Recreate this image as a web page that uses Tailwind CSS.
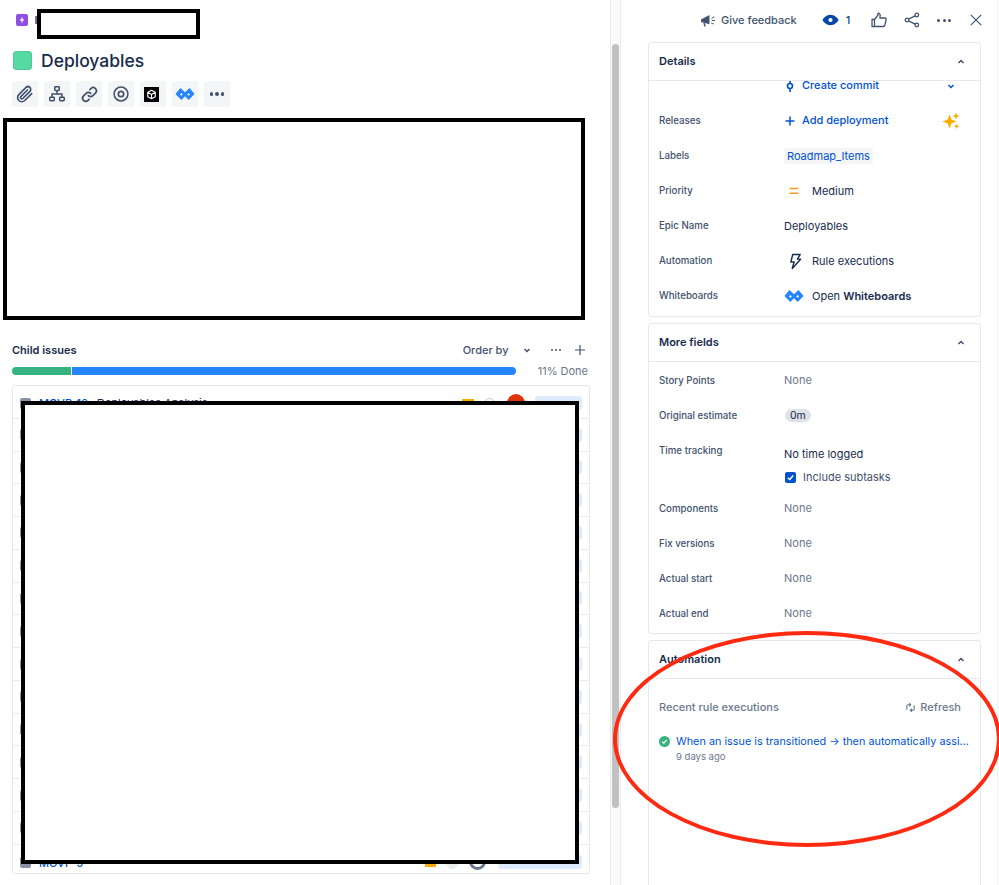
<!DOCTYPE html>
<html lang="en">
<head>
<meta charset="utf-8">
<script src="https://cdn.jsdelivr.net/npm/@tailwindcss/browser@4"></script>
<title>Deployables</title>
</head>
<body class="bg-white">
<div class="relative w-[999px] h-[885px] overflow-hidden bg-white text-[#172b4d] font-['Inter','Liberation_Sans',sans-serif]">
  <div class="flex h-full">
    <!-- Left column -->
    <div class="w-[610px] shrink-0 flex flex-col pl-3">
      <div class="h-[40px] flex items-center pl-1 shrink-0 gap-[7px]">
        <div class="w-3 h-3 mt-[-1px] rounded-[2px] bg-[#904ee2] flex items-center justify-center">
          <svg viewBox="0 0 12 12" class="w-3 h-3"><path d="M6.600 2.500 3.800 6.600h1.900l-.4 2.900 2.900-4.200H6.300z" fill="#fff"/></svg>
        </div>
        <div class="w-[2px] h-2 bg-[#6b778c]"></div>
      </div>
      <div class="flex items-center gap-[9px] h-[41px] shrink-0 pl-px">
        <div class="w-[19px] h-[19px] rounded-[3px] bg-[#57d9a3] border border-[#4fc796]"></div>
        <h1 class="text-[17.500px] leading-6 font-medium">Deployables</h1>
      </div>
      <div class="flex gap-[6px] shrink-0">
        <div class="w-[26px] h-[26px] rounded-[3px] bg-[#f4f5f7] flex items-center justify-center">
          <svg viewBox="0 0 24 24" class="w-[20px] h-[20px]" fill="none" stroke="#42526e" stroke-width="2" stroke-linecap="round"><path d="M20 11.500l-8.300 8.300a5 5 0 0 1-7.100-7.100l8.600-8.600a3.300 3.300 0 0 1 4.700 4.700l-8.600 8.600a1.600 1.600 0 0 1-2.300-2.300l7.900-7.900"/></svg>
        </div>
        <div class="w-[26px] h-[26px] rounded-[3px] bg-[#f4f5f7] flex items-center justify-center">
          <svg viewBox="0 0 20 20" class="w-[18px] h-[18px]" fill="none" stroke="#42526e" stroke-width="1.700"><rect x="7.500" y="2" width="5" height="4" rx=".8"/><rect x="2" y="13.500" width="5" height="4" rx=".8"/><rect x="13" y="13.500" width="5" height="4" rx=".8"/><path d="M10 6v4M4.500 13.500V10h11v3.500"/></svg>
        </div>
        <div class="w-[26px] h-[26px] rounded-[3px] bg-[#f4f5f7] flex items-center justify-center">
          <svg viewBox="0 0 24 24" class="w-[19px] h-[19px]" fill="none" stroke="#42526e" stroke-width="2.200" stroke-linecap="round"><path d="M10.500 13.500a4 4 0 0 0 5.700 0l3.300-3.300a4 4 0 0 0-5.700-5.700l-1.300 1.300"/><path d="M13.500 10.500a4 4 0 0 0-5.700 0l-3.300 3.300a4 4 0 0 0 5.700 5.700l1.300-1.300"/></svg>
        </div>
        <div class="w-[26px] h-[26px] rounded-[3px] bg-[#f4f5f7] flex items-center justify-center">
          <svg viewBox="0 0 20 20" class="w-[18px] h-[18px]" fill="none" stroke="#42526e"><circle cx="10" cy="10" r="7.700" stroke-width="1.700"/><circle cx="10" cy="10" r="3" stroke-width="1.900"/></svg>
        </div>
        <div class="w-[26px] h-[26px] rounded-[3px] bg-[#f4f5f7] flex items-center justify-center">
          <div class="w-[15px] h-[15px] mr-[3px] bg-black flex items-center justify-center">
            <svg viewBox="0 0 16 16" class="w-[15px] h-[15px]" fill="none" stroke="#fff" stroke-width="1.200" stroke-linejoin="round"><path d="M8 3.500 12 5.700v4.600L8 12.500 4 10.300V5.700zM4 5.700 8 8l4-2.300M8 8v4.500"/></svg>
          </div>
        </div>
        <div class="w-[26px] h-[26px] rounded-[3px] bg-[#f4f5f7] flex items-center justify-center">
          <svg viewBox="0 0 22 14" class="w-[20px] h-[14px]"><path d="M6 .5.500 7 7 13.500l4-4 4 4L21.500 7 16 .5 11 5z" fill="#2684ff"/><path d="M7 6 5.500 7.500 7 9l1.500-1.500zM15 6l-1.500 1.500L15 9l1.500-1.500z" fill="#f4f5f7"/></svg>
        </div>
        <div class="w-[26px] h-[26px] rounded-[3px] bg-[#f4f5f7] flex items-center justify-center gap-[2px]">
          <span class="w-[3.500px] h-[3.500px] rounded-full bg-[#42526e]"></span><span class="w-[3.500px] h-[3.500px] rounded-full bg-[#42526e]"></span><span class="w-[3.500px] h-[3.500px] rounded-full bg-[#42526e]"></span>
        </div>
      </div>

      <div class="mt-[233px] h-[20px] flex items-center shrink-0 w-[574px]">
        <span class="text-[11px] font-semibold">Child issues</span>
        <span class="ml-auto text-[11px] text-[#42526e] font-medium">Order by</span>
        <svg viewBox="0 0 10 10" class="w-[10px] h-[10px] ml-[13px]" fill="none" stroke="#42526e" stroke-width="1.500"><path d="M2.500 4 5 6.500 7.500 4"/></svg>
        <span class="ml-[19px] flex gap-[1.500px]"><i class="w-[2.500px] h-[2.500px] rounded-full bg-[#42526e]"></i><i class="w-[2.500px] h-[2.500px] rounded-full bg-[#42526e]"></i><i class="w-[2.500px] h-[2.500px] rounded-full bg-[#42526e]"></i></span>
        <svg viewBox="0 0 12 12" class="w-[12px] h-[12px] ml-[13px]" fill="none" stroke="#42526e" stroke-width="1.200"><path d="M6 1v10M1 6h10"/></svg>
      </div>
      <div class="flex items-center mt-[2px] h-[18px] shrink-0 w-[576px]">
        <div class="w-[59px] h-2 bg-[#36b37e] rounded-l-full"></div>
        <div class="w-px h-2"></div>
        <div class="w-[444px] h-2 bg-[#2684ff] rounded-r-full"></div>
        <span class="ml-auto text-[11px] text-[#6b778c]">11% Done</span>
      </div>
      <div class="mt-[5px] w-[578px] h-[489px] shrink-0 border border-[#e6e8ec] rounded-[3px] overflow-hidden flex flex-col items-stretch">
        <div class="h-[32.770px] shrink-0 flex items-center pl-[7px] pr-[7px] pt-[3px] border-b border-[#ebecf0] text-[11px]">
          <div class="w-[11px] h-[11px] rounded-[2px] bg-[#8993a4] mr-2"></div>
          <span class="text-[#0052cc] font-medium w-[58px] whitespace-nowrap">MOVP-12</span>
          <span class="whitespace-nowrap">Deployables Analysis</span>
          <div class="ml-auto w-[12px] h-[8px] bg-[#ffab00] mr-[10px]"></div>
          <div class="w-[11px] h-[11px] rounded-full border border-[#c1c7d0] mr-[12px]"></div>
          <div class="w-[18px] h-[18px] rounded-full bg-[#de350b] mr-[10px]"></div>
          <div class="w-[47px] h-[14px] rounded-[3px] bg-[#deebff]"></div>
        </div>
        <div class="h-[32.770px] shrink-0 flex items-center pl-[7px] pr-[7px] border-b border-[#ebecf0]"><div class="w-[11px] h-[11px] rounded-[2px] bg-[#8993a4]"></div><div class="ml-auto w-[47px] h-[14px] rounded-[3px] bg-[#deebff]"></div></div>
        <div class="h-[32.770px] shrink-0 flex items-center pl-[7px] pr-[7px] border-b border-[#ebecf0]"><div class="w-[11px] h-[11px] rounded-[2px] bg-[#8993a4]"></div><div class="ml-auto w-[47px] h-[14px] rounded-[3px] bg-[#deebff]"></div></div>
        <div class="h-[32.770px] shrink-0 flex items-center pl-[7px] pr-[7px] border-b border-[#ebecf0]"><div class="w-[11px] h-[11px] rounded-[2px] bg-[#8993a4]"></div><div class="ml-auto w-[47px] h-[14px] rounded-[3px] bg-[#deebff]"></div></div>
        <div class="h-[32.770px] shrink-0 flex items-center pl-[7px] pr-[7px] border-b border-[#ebecf0]"><div class="w-[11px] h-[11px] rounded-[2px] bg-[#8993a4]"></div><div class="ml-auto w-[47px] h-[14px] rounded-[3px] bg-[#deebff]"></div></div>
        <div class="h-[32.770px] shrink-0 flex items-center pl-[7px] pr-[7px] border-b border-[#ebecf0]"><div class="w-[11px] h-[11px] rounded-[2px] bg-[#8993a4]"></div><div class="ml-auto w-[47px] h-[14px] rounded-[3px] bg-[#deebff]"></div></div>
        <div class="h-[32.770px] shrink-0 flex items-center pl-[7px] pr-[7px] border-b border-[#ebecf0]"><div class="w-[11px] h-[11px] rounded-[2px] bg-[#8993a4]"></div><div class="ml-auto w-[47px] h-[14px] rounded-[3px] bg-[#deebff]"></div></div>
        <div class="h-[32.770px] shrink-0 flex items-center pl-[7px] pr-[7px] border-b border-[#ebecf0]"><div class="w-[11px] h-[11px] rounded-[2px] bg-[#8993a4]"></div><div class="ml-auto w-[47px] h-[14px] rounded-[3px] bg-[#deebff]"></div></div>
        <div class="h-[32.770px] shrink-0 flex items-center pl-[7px] pr-[7px] border-b border-[#ebecf0]"><div class="w-[11px] h-[11px] rounded-[2px] bg-[#8993a4]"></div><div class="ml-auto w-[47px] h-[14px] rounded-[3px] bg-[#deebff]"></div></div>
        <div class="h-[32.770px] shrink-0 flex items-center pl-[7px] pr-[7px] border-b border-[#ebecf0]"><div class="w-[11px] h-[11px] rounded-[2px] bg-[#8993a4]"></div><div class="ml-auto w-[47px] h-[14px] rounded-[3px] bg-[#deebff]"></div></div>
        <div class="h-[32.770px] shrink-0 flex items-center pl-[7px] pr-[7px] border-b border-[#ebecf0]"><div class="w-[11px] h-[11px] rounded-[2px] bg-[#8993a4]"></div><div class="ml-auto w-[47px] h-[14px] rounded-[3px] bg-[#deebff]"></div></div>
        <div class="h-[32.770px] shrink-0 flex items-center pl-[7px] pr-[7px] border-b border-[#ebecf0]"><div class="w-[11px] h-[11px] rounded-[2px] bg-[#8993a4]"></div><div class="ml-auto w-[47px] h-[14px] rounded-[3px] bg-[#deebff]"></div></div>
        <div class="h-[32.770px] shrink-0 flex items-center pl-[7px] pr-[7px] border-b border-[#ebecf0]"><div class="w-[11px] h-[11px] rounded-[2px] bg-[#8993a4]"></div><div class="ml-auto w-[47px] h-[14px] rounded-[3px] bg-[#deebff]"></div></div>
        <div class="h-[32.770px] shrink-0 flex items-center pl-[7px] pr-[7px] border-b border-[#ebecf0]"><div class="w-[11px] h-[11px] rounded-[2px] bg-[#8993a4]"></div><div class="ml-auto w-[47px] h-[14px] rounded-[3px] bg-[#deebff]"></div></div>
        <div class="h-[27px] shrink-0 flex items-start pt-[12px] pl-[7px] pr-[7px] text-[11px]">
          <div class="w-[11px] h-[11px] rounded-[2px] bg-[#8993a4] mr-2"></div>
          <span class="text-[#0052cc] font-medium leading-[13px] whitespace-nowrap">MOVP-9</span>
          <div class="ml-auto mt-[2px] w-[11px] h-[8px] bg-[#ffab00] mr-[10px]"></div>
          <div class="w-[13px] h-[13px] mt-[-1px] rounded-full bg-[#ebecf0] mr-[10px]"></div>
          <div class="w-[17px] h-[17px] mt-[-4px] rounded-full border-[3px] border-[#6b778c] mr-[12px]"></div>
          <div class="w-[84px] h-[14px] mt-[-2px] rounded-[3px] bg-[#deebff]"></div>
        </div>
      </div>
    </div>

    <!-- Left scrollbar -->
    <div class="w-[11px] shrink-0 pt-[44px] bg-[#fafafa] border-x border-[#ebebeb]">
      <div class="w-[7px] ml-px h-[764px] rounded-full bg-[#c1c1c1]"></div>
    </div>

    <!-- Right column -->
    <div class="ml-[27px] w-[333px] shrink-0 flex flex-col gap-[6px] pt-[42px]">
      <section class="h-[275px] shrink-0 border border-[#e6e8ec] rounded-[3px] flex flex-col overflow-hidden">
        <div class="h-[38px] shrink-0 flex items-center justify-between pl-[10px] pr-[14px] border-b border-[#e6e8ec]">
          <h2 class="text-[11px] font-semibold">Details</h2>
          <svg viewBox="0 0 10 10" class="w-[10px] h-[10px]" fill="none" stroke="#42526e" stroke-width="1.500"><path d="M2.500 6 5 3.500 7.500 6"/></svg>
        </div>
        <div class="overflow-hidden flex-1">
          <div class="mt-[-13px]">
            <div class="h-[35px] flex items-center pl-[10px] pr-[24px]">
              <span class="w-[125px]"></span>
              <svg viewBox="0 0 10 14" class="w-[10px] h-[14px] ml-px mr-[7px]" fill="none" stroke="#0052cc" stroke-width="1.600"><circle cx="5" cy="7" r="2.500"/><path d="M5 1v3.500M5 9.500V13"/></svg>
              <span class="text-[11px] leading-[11px] font-medium text-[#0052cc]">Create commit</span>
              <svg viewBox="0 0 10 10" class="w-[10px] h-[10px] ml-auto" fill="none" stroke="#0052cc" stroke-width="1.500"><path d="M2.500 4 5 6.500 7.500 4"/></svg>
            </div>
            <div class="h-[35px] flex items-center pl-[10px] pr-[20px]">
              <span class="w-[125px] pt-px text-[9.700px] font-medium text-[#42526e]">Releases</span>
              <svg viewBox="0 0 12 12" class="w-[12px] h-[12px] mr-[6px]" fill="none" stroke="#0052cc" stroke-width="1.500"><path d="M6 1.500v9M1.500 6h9"/></svg>
              <span class="text-[11px] font-medium text-[#0052cc]">Add deployment</span>
              <svg viewBox="0 0 18 18" class="w-[18px] h-[18px] ml-auto" fill="#ffab00"><path d="M7.500 2.500 9.400 7.600 14.500 9.500 9.400 11.400 7.500 16.500 5.600 11.400.5 9.500 5.600 7.600z"/><path d="M14 .5l1 2.500 2.500 1-2.500 1-1 2.500-1-2.500-2.500-1 2.500-1z"/><path d="M14.500 11.500l.8 2 2 .8-2 .8-.8 2-.8-2-2-.8 2-.8z"/></svg>
            </div>
            <div class="h-[35px] flex items-center pl-[10px]">
              <span class="w-[125px] pt-px text-[9.700px] font-medium text-[#42526e]">Labels</span>
              <span class="text-[11px] text-[#0052cc] bg-[#f4f5f7] rounded-[3px] px-[3px] h-[16px] leading-[16px]">Roadmap_Items</span>
            </div>
            <div class="h-[35.500px] flex items-center pl-[10px]">
              <span class="w-[125px] pt-px text-[9.700px] font-medium text-[#42526e]">Priority</span>
              <svg viewBox="0 0 12 12" class="w-[12px] h-[12px] ml-[4px] mr-[12px]" fill="#ff991f"><rect x="1.500" y="2.800" width="9" height="1.500" rx=".5"/><rect x="1.500" y="7.500" width="9" height="1.500" rx=".5"/></svg>
              <span class="text-[11px]">Medium</span>
            </div>
            <div class="h-[35px] flex items-center pl-[10px]">
              <span class="w-[125px] pt-px text-[9.700px] font-medium text-[#42526e]">Epic Name</span>
              <span class="text-[11px]">Deployables</span>
            </div>
            <div class="h-[35px] flex items-center pl-[10px]">
              <span class="w-[125px] pt-px text-[9.700px] font-medium text-[#42526e]">Automation</span>
              <svg viewBox="0 0 14 18" class="w-[13px] h-[17px] ml-[5px] mr-[10px]" fill="none" stroke="#172b4d" stroke-width="1.500" stroke-linejoin="round"><path d="M4 1.500h8L9 6.500h3.500L3.500 16.500l2-7H2z"/></svg>
              <span class="text-[11px]">Rule executions</span>
            </div>
            <div class="h-[35px] flex items-center pl-[10px]">
              <span class="w-[125px] pt-px text-[9.700px] font-medium text-[#42526e]">Whiteboards</span>
              <svg viewBox="0 0 22 14" class="w-[20px] h-[14px] mr-[8px]"><path d="M6 .5.500 7 7 13.500l4-4 4 4L21.500 7 16 .5 11 5z" fill="#2684ff"/><path d="M7 6 5.500 7.500 7 9l1.500-1.500zM15 6l-1.500 1.500L15 9l1.500-1.500z" fill="#fff"/></svg>
              <span class="text-[11px]">Open <b class="font-semibold">Whiteboards</b></span>
            </div>
          </div>
        </div>
      </section>

      <section class="h-[311px] shrink-0 border border-[#e6e8ec] rounded-[3px]">
        <div class="h-[38px] flex items-center justify-between pl-[10px] pr-[14px] border-b border-[#e6e8ec]">
          <h2 class="text-[11px] font-semibold">More fields</h2>
          <svg viewBox="0 0 10 10" class="w-[10px] h-[10px]" fill="none" stroke="#42526e" stroke-width="1.500"><path d="M2.500 6 5 3.500 7.500 6"/></svg>
        </div>
        <div class="pt-px">
          <div class="h-[35px] flex items-center pl-[10px]">
            <span class="w-[125px] pt-px text-[9.700px] font-medium text-[#42526e]">Story Points</span>
            <span class="text-[11px] text-[#6b778c]">None</span>
          </div>
          <div class="h-[35px] flex items-center pl-[10px]">
            <span class="w-[125px] pt-px text-[9.700px] font-medium text-[#42526e]">Original estimate</span>
            <span class="text-[10.500px] ml-px bg-[#dfe1e6] rounded-full px-[5px] h-[13px] leading-[13px]">0m</span>
          </div>
          <div class="h-[58px] flex items-start pl-[10px] pt-[10px]">
            <span class="w-[125px] text-[9.700px] leading-[15px] font-medium text-[#42526e]">Time tracking</span>
            <div class="flex flex-col">
              <span class="text-[11px] leading-[16px] mt-[3px]">No time logged</span>
              <div class="flex items-center mt-[7px] gap-[7px]">
                <span class="w-[11px] h-[11px] ml-px rounded-[2px] bg-[#0052cc] flex items-center justify-center">
                  <svg viewBox="0 0 10 10" class="w-[9px] h-[9px]" fill="none" stroke="#fff" stroke-width="1.600"><path d="M2 5.200 4.200 7.200 8 2.800"/></svg>
                </span>
                <span class="text-[11px] leading-[16px] text-[#42526e]">Include subtasks</span>
              </div>
            </div>
          </div>
          <div class="h-[35px] flex items-center pl-[10px]">
            <span class="w-[125px] pt-px text-[9.700px] font-medium text-[#42526e]">Components</span>
            <span class="text-[11px] text-[#6b778c]">None</span>
          </div>
          <div class="h-[35px] flex items-center pl-[10px]">
            <span class="w-[125px] pt-px text-[9.700px] font-medium text-[#42526e]">Fix versions</span>
            <span class="text-[11px] text-[#6b778c]">None</span>
          </div>
          <div class="h-[35px] flex items-center pl-[10px]">
            <span class="w-[125px] pt-px text-[9.700px] font-medium text-[#42526e]">Actual start</span>
            <span class="text-[11px] text-[#6b778c]">None</span>
          </div>
          <div class="h-[35px] flex items-center pl-[10px]">
            <span class="w-[125px] pt-px text-[9.700px] font-medium text-[#42526e]">Actual end</span>
            <span class="text-[11px] text-[#6b778c]">None</span>
          </div>
        </div>
      </section>

      <section class="h-[300px] shrink-0 border border-[#e6e8ec] rounded-[3px]">
        <div class="h-[38px] flex items-center justify-between pl-[10px] pr-[14px] border-b border-[#e6e8ec]">
          <h2 class="text-[11px] font-semibold">Automation</h2>
          <svg viewBox="0 0 10 10" class="w-[10px] h-[10px]" fill="none" stroke="#42526e" stroke-width="1.500"><path d="M2.500 6 5 3.500 7.500 6"/></svg>
        </div>
        <div class="pl-[10px] pr-[11px]">
          <div class="flex items-center justify-between mt-[20px] h-[16px]">
            <span class="text-[11px] font-medium text-[#6b778c]">Recent rule executions</span>
            <span class="flex items-center gap-[4px] pr-[8px] text-[11px] font-medium text-[#6b778c]">
              <svg viewBox="0 0 12 12" class="w-[11px] h-[11px]" fill="none" stroke="#6b778c" stroke-width="1.200"><path d="M2 8.500V4.500a1.500 1.500 0 0 1 1.500-1.500H6M4.500 1.300 6.200 3 4.500 4.700M10 3.500v4a1.500 1.500 0 0 1-1.500 1.500H6M7.500 7.300 5.800 9l1.700 1.700"/></svg>
              Refresh
            </span>
          </div>
          <div class="flex items-center mt-[18px] h-[16px]">
            <svg viewBox="0 0 12 12" class="w-[11px] h-[11px] shrink-0 mr-[6px]"><circle cx="6" cy="6" r="6" fill="#36b37e"/><path d="M3.500 6.200 5.300 7.800 8.500 4.400" fill="none" stroke="#fff" stroke-width="1.300"/></svg>
            <span class="text-[10.850px] text-[#0052cc] whitespace-nowrap">When an issue is transitioned → then automatically assi...</span>
          </div>
          <div class="pl-[17px] mt-[1px] text-[9.500px] leading-[14px] text-[#6b778c]">9 days ago</div>
        </div>
      </section>
    </div>

    <div class="w-[1px] ml-[16px] h-full bg-[#f0f0f0]"></div>
  </div>

  <!-- Top right toolbar -->
  <div class="absolute top-[9px] left-[700px] h-[22px] flex items-center text-[#42526e]">
    <svg viewBox="0 0 18 16" class="w-[17px] h-[15px]" fill="#42526e"><path d="M1 7l9-5v10L1 9.500z"/><path d="M3.500 10.500 4.500 14.500h1.500l-1-3.800z"/><path d="M12 5.500l3-2 .5.800-3 2zM12.500 7.500h3.500v1h-3.500zM12 10l3 1.500-.4.800-3-1.500z"/></svg>
    <span class="ml-[4px] text-[11px] font-medium">Give feedback</span>
    <svg viewBox="0 0 18 12" class="w-[17px] h-[12px] ml-[25px]"><path d="M9 .5C4.500.5 1.500 4 .5 6c1 2 4 5.500 8.500 5.500S16.500 8 17.500 6C16.500 4 13.500.5 9 .5z" fill="#0747a6"/><circle cx="9" cy="6" r="2.200" fill="#fff"/></svg>
    <span class="ml-[7px] text-[11px] font-medium text-[#0747a6]">1</span>
    <svg viewBox="0 0 16 16" class="w-[16px] h-[16px] ml-[21px]" fill="none" stroke="#42526e" stroke-width="1.300" stroke-linejoin="round"><path d="M1 7.500h2.500v7H1zM3.500 7.500 7 3V1.200c1.500 0 2.300 1 2.200 2.300L8.800 6H14c.8 0 1.300.7 1.100 1.500l-1.300 5.800c-.2.7-.7 1.200-1.500 1.200H3.500"/></svg>
    <svg viewBox="0 0 16 16" class="w-[16px] h-[16px] ml-[17px]" fill="none" stroke="#42526e" stroke-width="1.300"><circle cx="12.800" cy="3" r="1.800"/><circle cx="3" cy="8" r="1.800"/><circle cx="12.800" cy="13" r="1.800"/><path d="M4.600 7.200 11.200 3.800M4.600 8.800 11.200 12.200"/></svg>
    <span class="ml-[17px] flex gap-[2.500px]"><i class="w-[3px] h-[3px] rounded-full bg-[#42526e]"></i><i class="w-[3px] h-[3px] rounded-full bg-[#42526e]"></i><i class="w-[3px] h-[3px] rounded-full bg-[#42526e]"></i></span>
    <svg viewBox="0 0 12 12" class="w-[12px] h-[12px] ml-[19px]" fill="none" stroke="#42526e" stroke-width="1.200"><path d="M.8.800 11.200 11.200M11.200.8.800 11.200"/></svg>
  </div>

  <!-- Overlays painted on the screenshot -->
  <div class="absolute left-[37px] top-[9px] w-[163px] h-[30px] bg-white border-[4px] border-black"></div>
  <div class="absolute left-[3px] top-[118px] w-[582px] h-[202px] bg-white border-[4px] border-black"></div>
  <div class="absolute left-[21px] top-[401px] w-[558px] h-[463px] bg-white border-[4px] border-black"></div>
  <div class="absolute left-[613px] top-[631px] w-[388px] h-[216px] rounded-[50%] border-[4.500px] border-[#ff2a12]"></div>
</div>
</body>
</html>
